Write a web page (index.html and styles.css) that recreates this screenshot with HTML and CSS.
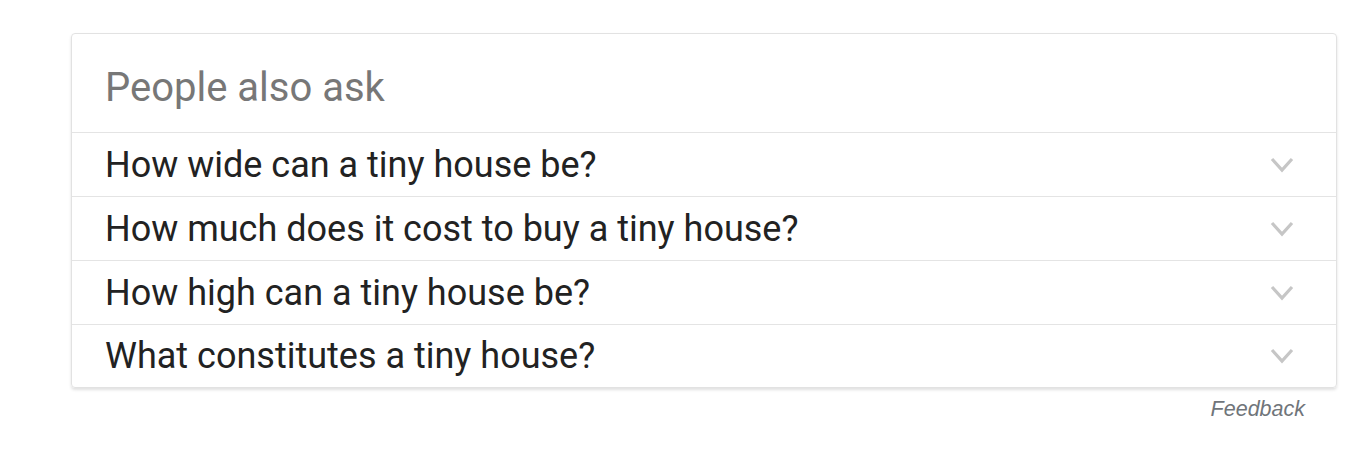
FILE: index.html
```html
<!DOCTYPE html>
<html>
<head>
<meta charset="utf-8">
<link rel="stylesheet" href="styles.css">
</head>
<body>
<div class="wrap">
  <div class="card">
    <div class="head">People also ask</div>
    <div class="row"><span class="q">How wide can a tiny house be?</span><svg class="chev" width="24" height="16" viewBox="0 0 24 16"><path d="M2 2 L12 13 L22 2" fill="none" stroke="#c6c6c6" stroke-width="3.2"/></svg></div>
    <div class="row"><span class="q">How much does it cost to buy a tiny house?</span><svg class="chev" width="24" height="16" viewBox="0 0 24 16"><path d="M2 2 L12 13 L22 2" fill="none" stroke="#c6c6c6" stroke-width="3.2"/></svg></div>
    <div class="row"><span class="q">How high can a tiny house be?</span><svg class="chev" width="24" height="16" viewBox="0 0 24 16"><path d="M2 2 L12 13 L22 2" fill="none" stroke="#c6c6c6" stroke-width="3.2"/></svg></div>
    <div class="row"><span class="q">What constitutes a tiny house?</span><svg class="chev" width="24" height="16" viewBox="0 0 24 16"><path d="M2 2 L12 13 L22 2" fill="none" stroke="#c6c6c6" stroke-width="3.2"/></svg></div>
  </div>
  <div class="feedback">Feedback</div>
</div>
</body>
</html>
```
FILE: styles.css
```css
html, body { margin: 0; padding: 0; background: #fff; }
.wrap { padding: 33px 0 0 71px; width: 1266px; }
.card {
  border: 1px solid #e2e2e2;
  border-radius: 4px;
  box-shadow: 0 2px 3px rgba(0,0,0,0.12);
  font-family: Roboto, "Liberation Sans", sans-serif;
}
.head {
  height: 98px;
  box-sizing: border-box;
  padding: 30px 0 0 33px;
  font-size: 40px;
  line-height: 48px;
  color: #777;
}
.row {
  height: 64px;
  box-sizing: border-box;
  border-top: 1px solid #e4e4e4;
  display: flex;
  align-items: center;
  justify-content: space-between;
  padding: 0 42px 0 33px;
  font-size: 36px;
  color: #222;
}
.row:last-child { height: 63px; }
.q { line-height: 40px; }
.chev { display: block; }
.feedback {
  text-align: right;
  padding-right: 32px;
  margin-top: 9px;
  font-family: "Liberation Sans", Arial, sans-serif;
  font-style: italic;
  font-size: 21.5px;
  color: #70757a;
}
```
